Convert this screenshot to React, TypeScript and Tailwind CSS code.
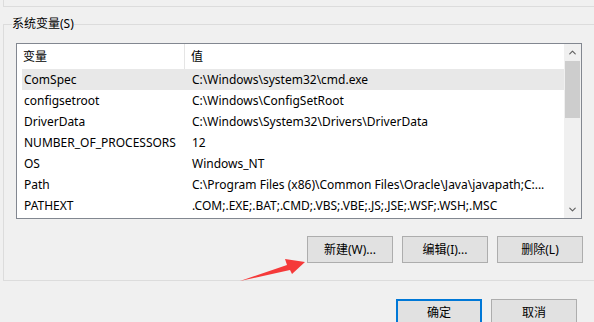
import { ChevronUp, ChevronDown } from 'lucide-react';

type EnvVar = {
  name: string;
  value: string;
};

const vars: EnvVar[] = [
  { name: 'ComSpec', value: 'C:\\Windows\\system32\\cmd.exe' },
  { name: 'configsetroot', value: 'C:\\Windows\\ConfigSetRoot' },
  { name: 'DriverData', value: 'C:\\Windows\\System32\\Drivers\\DriverData' },
  { name: 'NUMBER_OF_PROCESSORS', value: '12' },
  { name: 'OS', value: 'Windows_NT' },
  { name: 'Path', value: 'C:\\Program Files (x86)\\Common Files\\Oracle\\Java\\javapath;C:...' },
  { name: 'PATHEXT', value: '.COM;.EXE;.BAT;.CMD;.VBS;.VBE;.JS;.JSE;.WSF;.WSH;.MSC' },
];

function WinButton({ label, primary }: { label: string; primary?: boolean }) {
  return (
    <button
      className={
        'w-[86px] h-[27px] bg-[#e1e1e1] text-black text-[12px] leading-none ' +
        (primary ? 'border-2 border-[#0078d7]' : 'border border-[#adadad]')
      }
    >
      {label}
    </button>
  );
}

export default function App() {
  return (
    <div className="relative w-[594px] h-[322px] overflow-hidden bg-[#f0f0f0] text-black text-[12px] font-['Noto_Sans','Noto_Sans_CJK_SC',sans-serif]">
      {/* tail of the user variables group */}
      <div className="ml-[3px] w-[620px] h-[7px] border-l border-b border-[#dcdcdc]" />

      <fieldset className="mt-[8px] ml-[3px] w-[620px] h-[266px] border border-[#dcdcdc] pl-2 pt-[10px]">
        <legend className="px-0 leading-[18px]">系统变量(S)</legend>

        <div className="ml-[4px] w-[566px] h-[176px] border border-[#828790] bg-white flex">
          <div className="flex-1 pl-[5px]">
            <div className="flex h-[25px] items-center">
              <div className="w-[163px] h-full flex items-center pl-[1px] border-r border-[#e5e5e5]">变量</div>
              <div className="pl-[6px]">值</div>
            </div>
            {vars.map((v, i) => (
              <div
                key={v.name}
                className={'flex h-[21px] items-center whitespace-nowrap ' + (i === 0 ? 'bg-[#e8e8e8]' : '')}
              >
                <div className="w-[163px] pl-[2px]">{v.name}</div>
                <div className="pl-[7px]">{v.value}</div>
              </div>
            ))}
          </div>

          <div className="w-[17px] bg-[#f0f0f0] flex flex-col items-center">
            <div className="h-[17px] flex items-center justify-center text-[#606060]">
              <ChevronUp size={11} strokeWidth={2.5} />
            </div>
            <div className="w-[15px] h-[57px] bg-[#cdcdcd]" />
            <div className="flex-1" />
            <div className="h-[17px] flex items-center justify-center text-[#606060]">
              <ChevronDown size={11} strokeWidth={2.5} />
            </div>
          </div>
        </div>

        <div className="mt-[17px] ml-[295px] flex gap-[9px]">
          <WinButton label="新建(W)..." />
          <WinButton label="编辑(I)..." />
          <WinButton label="删除(L)" />
        </div>
      </fieldset>

      <div className="mt-[18px] ml-[396px] flex gap-[9px]">
        <WinButton label="确定" primary />
        <WinButton label="取消" />
      </div>

      <svg className="absolute left-0 top-0 pointer-events-none" width="594" height="322">
        <polygon
          points="240,281 287,265 285,259 305,262 292,274 290,270"
          fill="#f53a3a"
        />
      </svg>
    </div>
  );
}
